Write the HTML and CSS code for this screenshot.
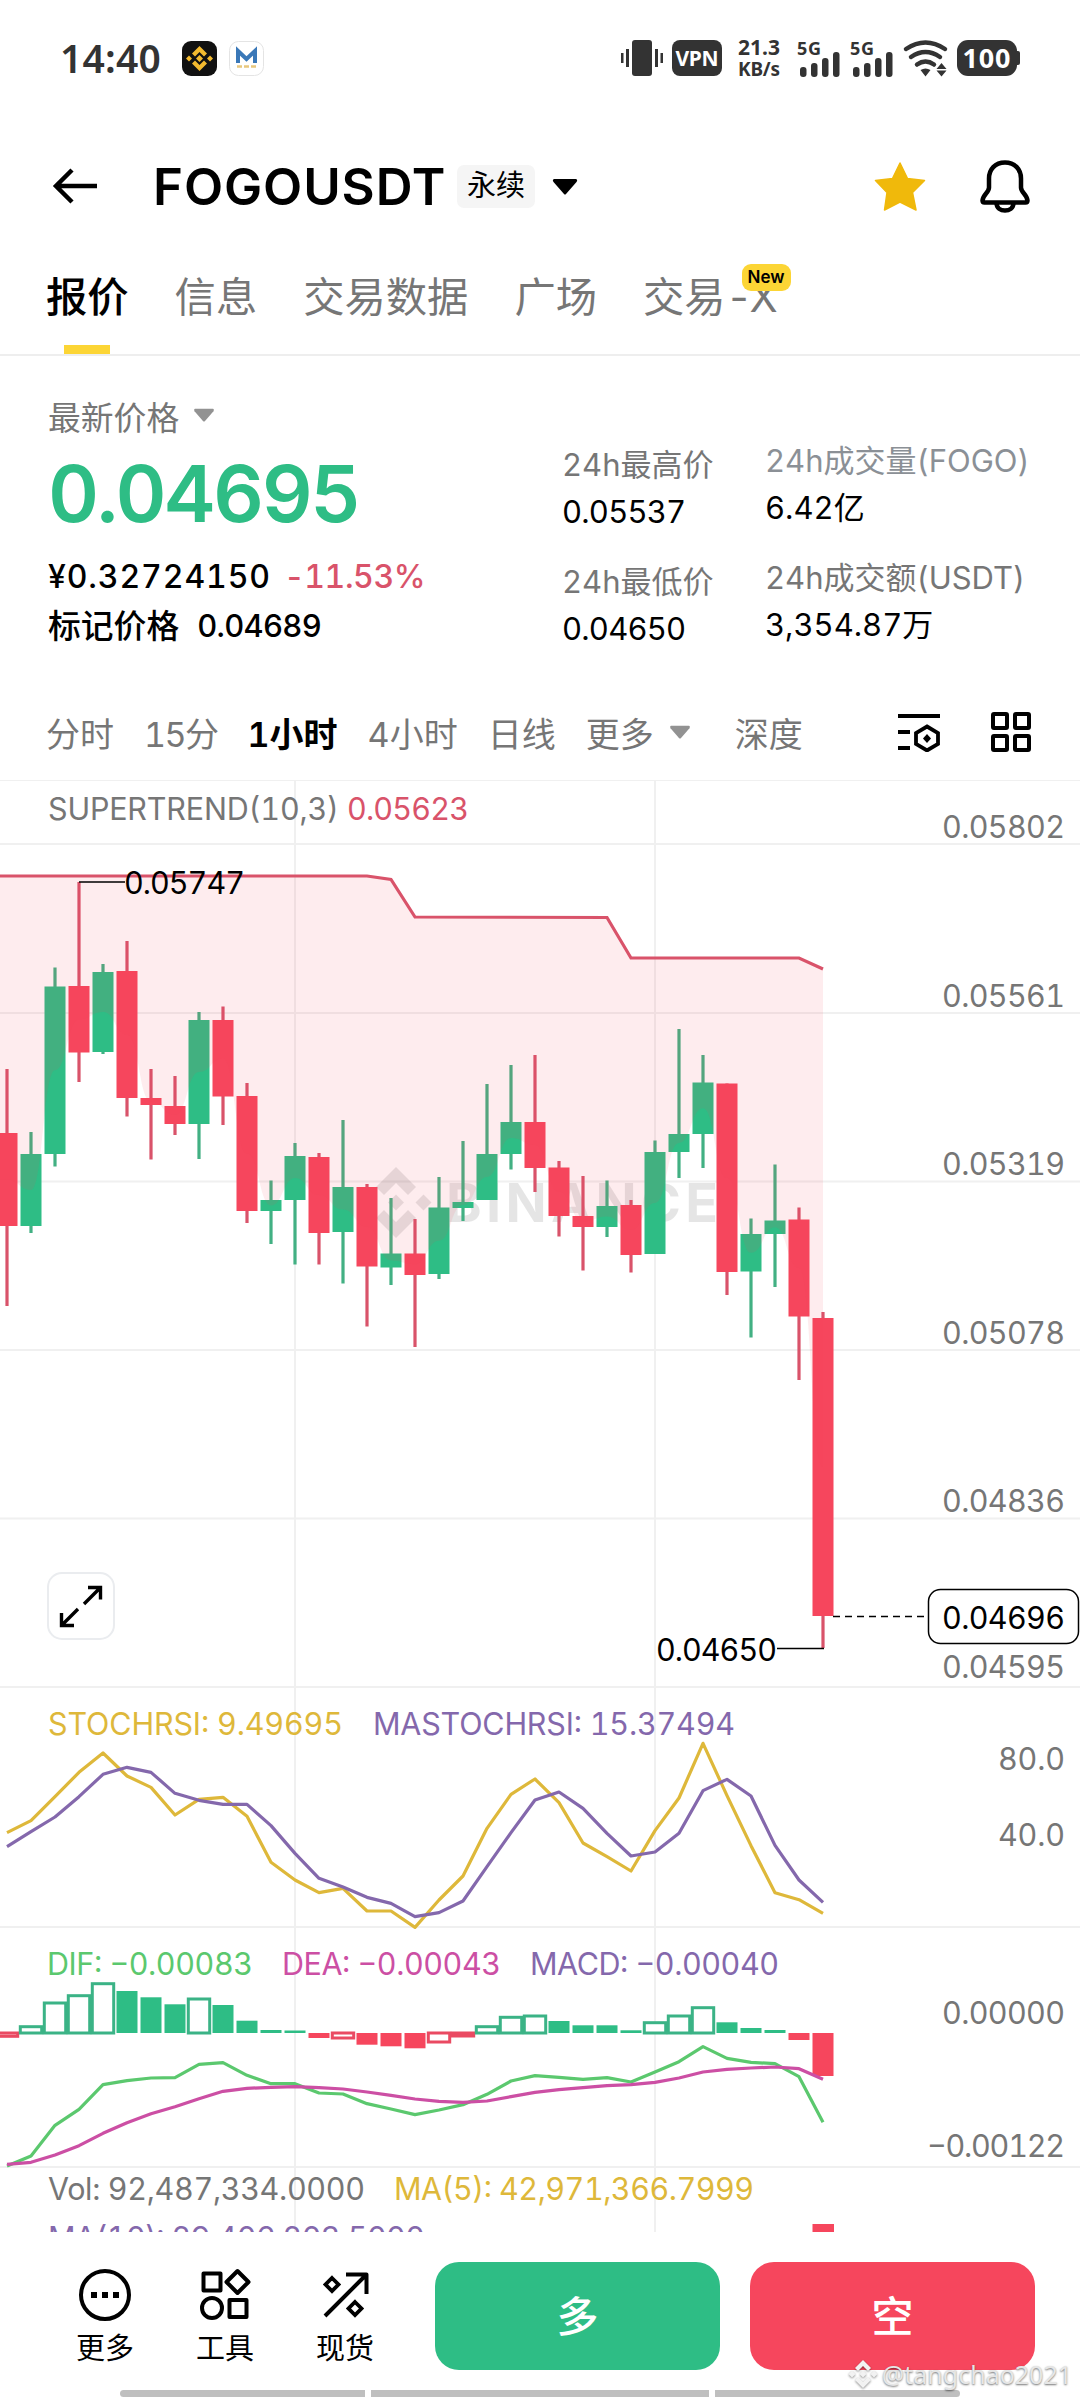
FILE: index.html
```html
<!DOCTYPE html>
<html lang="zh-CN">
<head>
    <meta charset="UTF-8">
    <meta name="viewport" content="width=device-width, initial-scale=1.0">
    <title>FOGOUSDT 永续</title>
    <link rel="stylesheet" href="styles.css">
</head>
<body>
    <div class="status-bar">
        <span class="clock">14:40</span>
        <svg class="app-icon" width="35" height="35" viewBox="0 0 35 35">
            <rect width="35" height="35" rx="9" fill="#111"/>
            <g fill="#f3ba2f">
                <path d="M17.5 5l7.5 7.5-3 3-4.500-4.500-4.500 4.500-3-3z"/>
                <path d="M17.500 30l7.500-7.500-3-3-4.500 4.500-4.500-4.500-3 3z"/>
                <path d="M17.500 14l3.500 3.500-3.500 3.500-3.500-3.500zM7 14.500l3 3-3 3-3-3zM28 14.500l3 3-3 3-3-3z"/>
            </g>
        </svg>
        <svg class="app-icon" width="35" height="35" viewBox="0 0 35 35">
            <rect x=".5" y=".5" width="34" height="34" rx="9" fill="#fff" stroke="#e4e4e4"/>
            <path d="M9 22V10l8.500 8 8.500-8v12" fill="none" stroke="#3a78b8" stroke-width="4"/>
            <path d="M8 25.500h5M15 25.500h5M22 25.500h5" stroke="#e8c77e" stroke-width="2.500"/>
        </svg>
        <svg class="status-icons" width="400" height="56" viewBox="0 -8 400 56">
            <g fill="#333">
                <rect x="11" y="2" width="20" height="36" rx="3"/>
                <path d="M0 15h2.500v10H0zM5 11h3v18H5zM34 11h3v18h-3zM39.500 15H42v10h-2.500z"/>
                <rect x="51" y="2" width="50" height="36" rx="8"/>
                <text x="117" y="16.500" font-size="21" textLength="42">21.3</text>
                <text x="117" y="38" font-size="19" textLength="42">KB/s</text>
                <text x="176" y="16.500" font-size="18" textLength="24">5G</text>
                <text x="229" y="16.500" font-size="18" textLength="24">5G</text>
                <g id="bars">
                    <rect x="179" y="29" width="6.500" height="10" rx="3"/>
                    <rect x="190" y="25" width="6.500" height="14" rx="3"/>
                    <rect x="201" y="20" width="6.500" height="19" rx="3"/>
                    <rect x="212" y="14" width="6.500" height="25" rx="3"/>
                </g>
                <use href="#bars" x="53"/>
                <path d="M299.500 32q5-3 10 0l-5 6.500zM320.500 25l5 6h-10zM320.500 38.500l5-6h-10z"/>
                <rect x="336" y="2" width="60" height="36" rx="11"/>
                <rect x="394" y="13" width="5" height="14" rx="2"/>
            </g>
            <g fill="none" stroke="#333" stroke-width="4.500" stroke-linecap="round">
                <path d="M285 11q19.500-13 39 0M290 19q14.500-10 29 0M296 26.500q8.500-6 17 0"/>
            </g>
            <g fill="#fff">
                <text x="54.500" y="27.500" font-size="21" textLength="43">VPN</text>
                <text x="341.500" y="29.500" font-size="27" textLength="48">100</text>
            </g>
        </svg>
    </div>

    <div class="header">
        <svg class="back" width="46" height="36" viewBox="0 0 46 36" fill="none" stroke="#000" stroke-width="4.500">
            <path d="M45 18H4M20 2L4 18l16 16"/>
        </svg>
        <h1>FOGOUSDT</h1>
        <span class="tag">永续</span>
        <svg class="caret" width="26" height="17" viewBox="0 0 26 17"><path d="M2 1h22q2 1 .5 3L14 16q-1 1-2 0L1.500 4Q0 2 2 1z"/></svg>
        <svg class="star" width="52" height="50" viewBox="0 0 52 50">
            <path d="M26 2l7.500 15.500 17 2L38.500 31.500l3.500 17.500L26 41 10.500 49l2.500-17.500L1.500 19.500l17-2z" fill="#f0b90b" stroke="#f0b90b" stroke-width="1.500" stroke-linejoin="round"/>
        </svg>
        <svg class="bell" width="50" height="53" viewBox="0 0 50 53" fill="none" stroke="#000" stroke-width="4.500" stroke-linejoin="round">
            <path d="M25 2.500c-10 0-16 7-16 16v9c0 5-6 7-6.500 13 0 1.500 1 2 2 2h41c1 0 2-.5 2-2-.5-6-6.500-8-6.500-13v-9c0-9-6-16-16-16z"/>
            <path d="M16.500 43c0 10 17 10 17 0"/>
        </svg>
    </div>

    <div class="tabs">
        <span class="tab active">报价</span>
        <span class="tab">信息</span>
        <span class="tab">交易数据</span>
        <span class="tab">广场</span>
        <span class="tab">交易<span class="suffix">-X</span><b class="new">New</b></span>
    </div>

    <div class="quote">
        <div class="quote-main">
            <div class="last-label">最新价格
                <svg class="caret" width="22" height="14" viewBox="0 0 26 17"><path fill="#929292" d="M2 1h22q2 1 .5 3L14 16q-1 1-2 0L1.500 4Q0 2 2 1z"/></svg>
            </div>
            <div class="last-price">0.04695</div>
            <div class="fiat"><span>¥0.32724150</span><span class="down">-11.53%</span></div>
            <div class="mark"><span>标记价格</span><span class="mark-price">0.04689</span></div>
        </div>
        <div class="stats high-low">
            <div class="label">24h最高价</div>
            <div class="value">0.05537</div>
            <div class="label">24h最低价</div>
            <div class="value">0.04650</div>
        </div>
        <div class="stats">
            <div class="label light">24h成交量(FOGO)</div>
            <div class="value">6.42亿</div>
            <div class="label">24h成交额(USDT)</div>
            <div class="value">3,354.87万</div>
        </div>
    </div>

    <div class="periods">
        <span>分时</span>
        <span class="tight">15分</span>
        <span class="active">1小时</span>
        <span>4小时</span>
        <span>日线</span>
        <span>更多</span>
        <svg class="caret" width="22" height="14" viewBox="0 0 26 17"><path fill="#929292" d="M2 1h22q2 1 .5 3L14 16q-1 1-2 0L1.500 4Q0 2 2 1z"/></svg>
        <span class="depth">深度</span>
        <svg class="indicator" width="44" height="40" viewBox="0 0 44 40" fill="none" stroke="#000" stroke-width="3.800">
            <path d="M1 4h42M1 20h12M1 36h12"/>
            <path d="M30 14.500l11 6.500v11l-11 6.500-11-6.500V21z"/>
            <path d="M30 22l4 4.500-4 4.500-4-4.500z" fill="#000" stroke="none"/>
        </svg>
        <svg class="layout" width="42" height="42" viewBox="0 0 42 42" fill="none" stroke="#000" stroke-width="4">
            <rect x="3" y="3" width="14" height="14" rx="1"/>
            <rect x="25" y="3" width="14" height="14" rx="1"/>
            <rect x="3" y="25" width="14" height="14" rx="1"/>
            <rect x="25" y="25" width="14" height="14" rx="1"/>
        </svg>
    </div>

    <svg class="chart" id="chart" width="1080" height="1452" viewBox="0 0 1080 1452">
        <path class="grid" d="M0 0H1080M0 64H1080M0 233H1080M0 401.500H1080M0 570H1080M0 738.500H1080M0 907H1080M0 1147H1080M0 1387H1080M295 0V1452M655 0V1452"/>
        <g class="brand">
            <path d="M396 387l20 20-8 8-12-12-12 12-8-8zM396 458l20-20-8-8-12 12-12-12-8 8zM396 414.500l8 8-8 8-8-8zM423.500 414.500l8 8-8 8-8-8zM368.500 414.500l8 8-8 8-8-8z"/>
            <text x="446" y="442" textLength="272">BINANCE</text>
        </g>
        <g id="candles"></g>
        <g id="trend"></g>
        <g id="macd"></g>
        <g id="lines"></g>

        <path class="pointer" d="M79 102H125M777 868.500H824"/>
        <path class="pointer" stroke-dasharray="7 5" d="M833 836.500H927"/>
        <g class="black">
            <text x="124" y="114" textLength="121">0.05747</text>
            <text x="656" y="881" textLength="121">0.04650</text>
        </g>
        <rect class="price-box" x="928.500" y="809.500" width="150" height="54" rx="12"/>

        <g class="axis">
            <text x="942" y="58" textLength="123">0.05802</text>
            <text x="942" y="227" textLength="123">0.05561</text>
            <text x="942" y="395" textLength="123">0.05319</text>
            <text x="942" y="564" textLength="123">0.05078</text>
            <text x="942" y="732" textLength="123">0.04836</text>
            <text class="black" x="942" y="849" textLength="123">0.04696</text>
            <text x="942" y="898" textLength="123">0.04595</text>
            <text x="998" y="990" textLength="67">80.0</text>
            <text x="998" y="1066" textLength="67">40.0</text>
            <text x="942" y="1244" textLength="123">0.00000</text>
            <text x="927" y="1377" textLength="138">−0.00122</text>
        </g>

        <text class="gray" x="48" y="40" textLength="291">SUPERTREND(10,3)</text>
        <text class="red" x="347" y="40" textLength="122">0.05623</text>
        <text class="yellow" x="48" y="955" textLength="295">STOCHRSI: 9.49695</text>
        <text class="purple" x="373" y="955" textLength="362">MASTOCHRSI: 15.37494</text>
        <text class="green" x="47" y="1195" textLength="206">DIF: −0.00083</text>
        <text class="pink" x="282" y="1195" textLength="219">DEA: −0.00043</text>
        <text class="purple" x="530" y="1195" textLength="249">MACD: −0.00040</text>
        <text class="gray" x="48" y="1420" textLength="317">Vol: 92,487,334.0000</text>
        <text class="yellow" x="394" y="1420" textLength="360">MA(5): 42,971,366.7999</text>
        <text class="purple" x="48" y="1469" textLength="377">MA(10): 29,406,203.5000</text>
        <rect x="812.500" y="1444" width="21.500" height="8" fill="#f6465d"/>

        <g fill="none">
            <rect x="48" y="793" width="66" height="66" rx="14" fill="#fff" stroke="#eaecef" stroke-width="2"/>
            <path d="M84 824l16-16M88 807.500h12.500v12M78 829l-16 16M61.500 833v12.500h12.500" stroke="#000" stroke-width="3.400"/>
        </g>
    </svg>

    <div class="footer">
        <div class="tool">
            <svg width="54" height="54" viewBox="0 0 54 54">
                <circle cx="27" cy="27" r="24" fill="none" stroke="#000" stroke-width="4"/>
                <path d="M13 24h6v6h-6zM24 24h6v6h-6zM35 24h6v6h-6z"/>
            </svg>
            更多
        </div>
        <div class="tool">
            <svg width="54" height="54" viewBox="0 0 54 54" fill="none" stroke="#000" stroke-width="4" stroke-linejoin="round">
                <rect x="5.500" y="5.500" width="17" height="17"/>
                <path d="M39.500 3L50.500 14l-11 11-11-11z"/>
                <circle cx="14" cy="40" r="10"/>
                <rect x="31.500" y="32" width="17" height="17"/>
            </svg>
            工具
        </div>
        <div class="tool">
            <svg width="54" height="54" viewBox="0 0 54 54" fill="none" stroke="#000" stroke-width="4">
                <path d="M7 48L48 7M28 6.500h20.500V26" stroke-linejoin="round"/>
                <path d="M14 10l6.500 6.500L14 23l-6.500-6.500zM37 34l6.500 6.500L37 47l-6.500-6.500z" stroke-width="3.800"/>
            </svg>
            现货
        </div>
        <button class="long">多</button>
        <button class="short">空</button>
    </div>
    <div class="home-bar"><i></i><i></i><i></i></div>
    <div class="signature">
        <svg width="30" height="30" viewBox="0 0 30 30">
            <path d="M15 1l8 8-3 3-5-5-5 5-3-3zM15 29l8-8-3-3-5 5-5-5-3 3zM15 11.500l3.500 3.500-3.500 3.500-3.500-3.500zM4 11.500L7.500 15 4 18.500.500 15zM26 11.500l3.500 3.500-3.500 3.500-3.500-3.500z"/>
        </svg>
        @tangchao2021
    </div>

    <script src="chart.js"></script>
</body>
</html>
```
FILE: styles.css
```css
* {
    box-sizing: border-box;
}

body {
    margin: 0;
    width: 1080px;
    height: 2400px;
    position: relative;
    overflow: hidden;
    background-color: #fff;
    color: #000;
    font-family: Inter, "Noto Sans CJK SC", sans-serif;
    font-feature-settings: "tnum";
}

svg {
    display: block;
    flex-shrink: 0;
}

/* 状态栏 */
.status-bar {
    height: 116px;
    padding: 38px 59px 0 60px;
    display: flex;
    align-items: flex-start;
    color: #333;
    font-family: "Noto Sans", sans-serif;
}

.clock {
    width: 122px;
    font-size: 39px;
    line-height: 40px;
    font-weight: 600;
    letter-spacing: 0.2px;
}

.app-icon {
    margin: 3px 12px 0 0;
}

.status-icons {
    margin: -8px 0 0 auto;
    font-weight: 700;
}

/* 标题栏 */
.header {
    height: 140px;
    padding: 0 50px 0 52px;
    display: flex;
    align-items: center;
}

h1 {
    margin: 0 0 0 55px;
    width: 304px;
    font-size: 51px;
    font-weight: 600;
    letter-spacing: 0.9px;
    white-space: nowrap;
}

.tag {
    padding: 0 10px;
    height: 43px;
    line-height: 42px;
    font-size: 29px;
    border-radius: 7px;
    background-color: #f5f5f5;
}

.header .caret {
    margin-left: 17px;
}

.star {
    margin-left: auto;
}

.bell {
    margin-left: 54px;
}

/* 页签 */
.tabs {
    height: 100px;
    padding-left: 46px;
    display: flex;
    gap: 46px;
    border-bottom: 2px solid #eee;
    font-size: 41.3px;
    line-height: 82px;
    color: #767676;
}

.tab {
    position: relative;
    white-space: nowrap;
}

.tab.active {
    color: #000;
    font-weight: 500;
}

.tab.active::after {
    content: "";
    position: absolute;
    left: 18px;
    bottom: 0;
    width: 46px;
    height: 9px;
    background-color: #fcd535;
}

.suffix {
    letter-spacing: -3px;
}

.new {
    position: absolute;
    right: -16px;
    top: 8px;
    width: 49px;
    height: 27px;
    border-radius: 9px;
    background-color: #fcd535;
    color: #000;
    font-size: 17px;
    line-height: 27px;
    font-weight: 600;
    text-align: center;
}

/* 行情数据 */
.quote {
    height: 334px;
    padding: 34px 0 0 48px;
    display: flex;
    font-size: 31px;
}

.quote-main {
    width: 514px;
}

.last-label {
    display: flex;
    align-items: center;
    gap: 14px;
    height: 50px;
    font-size: 32.8px;
    color: #767676;
}

.last-price {
    height: 106px;
    line-height: 106px;
    font-size: 79px;
    font-weight: 600;
    letter-spacing: -2.4px;
    color: #2ebd85;
}

.fiat {
    height: 59px;
    line-height: 61px;
    display: flex;
    gap: 13px;
    font-size: 32px;
    font-weight: 500;
    letter-spacing: 0.9px;
}

.down {
    color: #d9536a;
    letter-spacing: -0.4px;
}

.mark {
    height: 40px;
    line-height: 42px;
    display: flex;
    gap: 18px;
    font-size: 32.8px;
    font-weight: 500;
}

.mark-price {
    font-size: 31px;
    letter-spacing: -0.7px;
}

.stats {
    padding-top: 48px;
    white-space: nowrap;
}

.high-low {
    width: 203px;
    padding-top: 52px;
}

.label {
    height: 46px;
    line-height: 46px;
    color: #767676;
}

.label.light {
    color: #8b9096;
}

.value {
    height: 71px;
    line-height: 48px;
}

.high-low .value {
    letter-spacing: -0.8px;
}

/* 周期切换 */
.periods {
    height: 90px;
    padding: 0 48px 6px 46px;
    display: flex;
    align-items: center;
    gap: 30px;
    font-size: 34px;
    color: #767676;
    white-space: nowrap;
}

.periods .active {
    color: #000;
    font-weight: 600;
}

.periods .tight {
    letter-spacing: -1.5px;
}

.periods .caret {
    margin-left: -15px;
}

.depth {
    margin-left: 14px;
}

.indicator {
    margin-left: auto;
}

.layout {
    margin-left: 19px;
}

/* 图表 */
.chart {
    font-size: 30.5px;
    overflow: hidden;
}

.grid {
    fill: none;
    stroke: #f0f0f0;
    stroke-width: 2;
}

.brand {
    fill: #000;
    fill-opacity: 0.1;
    font-size: 54px;
    font-weight: 700;
}

.up-body { fill: #2ebd85; }
.down-body { fill: #f6465d; }
.up-line { fill: none; stroke: #42b083; stroke-width: 3.2; }
.down-line { fill: none; stroke: #d9536a; stroke-width: 3.2; }
.trend-area { fill: #f6465d; fill-opacity: 0.1; }
.line { fill: none; stroke-width: 3.2; stroke-linejoin: round; }
.stroke-yellow { stroke: #deb83a; }
.stroke-purple { stroke: #8468ac; }
.stroke-green { stroke: #5bc86e; }
.stroke-pink { stroke: #cc4fa4; }
.pointer { fill: none; stroke: #000; stroke-width: 1.5; }
.price-box { fill: #fff; stroke: #000; stroke-width: 1.5; }
.axis, .gray { fill: #767676; }
.black { fill: #000; }
.red { fill: #d9536a; }
.yellow { fill: #deb83a; }
.purple { fill: #8468ac; }
.green { fill: #5bc86e; }
.pink { fill: #cc4fa4; }

/* 底部操作栏 */
.footer {
    height: 158px;
    padding: 30px 45px 0 45px;
    display: flex;
}

.tool {
    width: 120px;
    padding-top: 6px;
    display: flex;
    flex-direction: column;
    align-items: center;
    gap: 9px;
    font-size: 29px;
    line-height: 36px;
}

.long,
.short {
    width: 285px;
    height: 108px;
    margin: 0 0 0 30px;
    padding: 0 0 5px;
    border: none;
    border-radius: 24px;
    font: inherit;
    font-size: 42px;
    font-weight: 500;
    color: #fff;
}

.long {
    background-color: #2ebd85;
}

.short {
    background-color: #f6465d;
}

.home-bar {
    width: 840px;
    height: 7px;
    margin: 0 auto;
    display: grid;
    grid-template-columns: 245px 338px 245px;
    gap: 6px;
    border-radius: 4px;
    overflow: hidden;
}

.home-bar i {
    background-color: #bfbfbf;
}

.signature {
    position: absolute;
    right: 8px;
    bottom: 9px;
    display: flex;
    align-items: center;
    gap: 4px;
    height: 34px;
    font-family: "Noto Sans", sans-serif;
    font-size: 25px;
    color: #e6e6e6;
    text-shadow: 0 1px 2px rgba(0, 0, 0, 0.55);
}

.signature svg {
    fill: #f2f2f2;
    filter: drop-shadow(0 1px 1px rgba(0, 0, 0, 0.45));
}
```
FILE: chart.js
```js
const STEP = 24;
const FIRST = 7;
const ZERO = 1253;

// 每根K线: [最高, 实体上沿, 实体下沿, 最低, 涨跌]
const candles = [
    [289, 353, 446, 526, 0], [352, 374, 446, 453, 1], [187.5, 206.5, 374, 386.5, 1],
    [102, 206, 272.5, 302, 0], [184, 192, 272, 274, 1], [161, 191, 318, 336.5, 0],
    [289, 318, 325, 379.5, 0], [296, 326, 344, 355, 0], [232, 240, 344, 379, 1],
    [226.5, 240, 316.5, 345, 0], [303, 316, 431, 443, 0], [400.5, 420, 431, 464, 1],
    [363, 376, 420, 484.5, 1], [373, 377, 453, 484.5, 0], [340, 407, 452, 503.5, 1],
    [404, 407, 486.5, 546.5, 0], [418, 473.5, 487.5, 505, 1], [439, 473.5, 495, 567, 0],
    [397, 427.5, 494, 499, 1], [361, 422, 428, 441, 1], [304, 374, 420, 420, 1],
    [285, 342, 374, 389.5, 1], [275, 342, 388, 412, 0], [381, 387.5, 436, 456.5, 0],
    [396, 436, 447, 490.5, 0], [400.5, 426, 447, 457, 1], [420, 425, 475, 492.5, 0],
    [360.5, 372, 474, 474, 1], [249, 354, 372, 398, 1], [275, 302.5, 354, 388, 1],
    [303.5, 303.5, 492, 515, 0], [438.5, 454, 491.5, 557.5, 1], [384.5, 440.5, 454, 507, 1],
    [427.5, 439.5, 536.5, 600, 0], [532, 538, 836, 868, 0]
];

// MACD柱: [高度, 是否空心]
const bars = [
    [-3.3, 1], [6.3, 1], [30, 1], [37.3, 1], [49.3, 1], [42, 0], [35.7, 0], [28.7, 0], [34, 1],
    [28, 0], [12.3, 0], [3, 0], [2.5, 0], [-5, 0], [-5, 1], [-11.7, 0], [-13.3, 0], [-15.3, 0],
    [-9, 1], [-3, 1], [6.3, 1], [15.7, 1], [17, 1], [12, 0], [7.7, 0], [7.7, 0], [2.7, 0],
    [10.3, 1], [17, 1], [25.3, 1], [10.7, 0], [5, 0], [3, 0], [-7, 0], [-43, 0]
];

const stoch = [458, 422, 350, 277, 219, 288, 322, 405, 358, 352, 409, 547, 600, 638, 625, 693, 693, 742, 660, 588, 445, 343, 297, 368, 489, 530, 573, 452, 354, 190, 347, 497, 638, 659, 700];
const stochMa = [500, 455, 411, 350, 283, 262, 277, 340, 361, 373, 373, 437, 520, 595, 621, 652, 670, 710, 698, 663, 560, 458, 360, 336, 385, 460, 528, 516, 460, 332, 298, 348, 496, 600, 667];
const dif = [708, 678, 586, 538, 464, 452, 444, 443, 403, 398, 436, 461, 461, 489, 492, 521, 537, 554, 540, 524, 493, 453, 437, 442, 448, 443, 456, 426, 395, 350, 385, 397, 401, 440, 577];
const dea = [703, 697, 675, 647, 610, 578, 551, 530, 506, 484, 475, 472, 470, 473, 477, 486, 496, 507, 514, 517, 513, 500, 487, 479, 473, 467, 464, 457, 444, 426, 418, 414, 411, 416, 448];

const x = i => FIRST + STEP * i;

function drawCandles() {
    let html = '';
    candles.forEach(([high, top, bottom, low, up], i) => {
        const name = up ? 'up' : 'down';
        html += `<path class="${name}-line" d="M${x(i)} ${high}V${low}"/>`;
        html += `<rect class="${name}-body" x="${x(i) - 10.5}" y="${top}" width="21" height="${bottom - top}"/>`;
    });
    document.getElementById('candles').innerHTML = html;
}

// 超级趋势线以及到K线中点之间的填充
function drawTrend() {
    const trend = '0,96 367,96 391,99.5 415,137 607,137.5 631,178 799,178 823,189';
    const mid = candles.map(c => (c[1] + c[2]) / 2);
    let area = `M${trend.split(' ').join('L')}L${x(34)},${mid[34]}`;
    for (let i = 33; i >= 0; i--) {
        const half = x(i) + STEP / 2;
        area += `C${half},${mid[i + 1]} ${half},${mid[i]} ${x(i)},${mid[i]}`;
    }
    area += `L0,${mid[0]}Z`;
    document.getElementById('trend').innerHTML =
        `<path class="trend-area" d="${area}"/><polyline class="down-line" points="${trend}"/>`;
}

function drawMacd() {
    let html = '';
    bars.forEach(([value, hollow], i) => {
        const name = value > 0 ? 'up' : 'down';
        const y = value > 0 ? ZERO - value : ZERO;
        const h = Math.abs(value);
        if (hollow) {
            const color = value > 0 ? '#3bb386' : '#ea4a62';
            html += `<rect fill="#fff" stroke="${color}" stroke-width="3" x="${x(i) - 10.7}" y="${y}" width="21.4" height="${h}"/>`;
        } else {
            html += `<rect class="${name}-body" x="${x(i) - 10.5}" y="${y}" width="21" height="${h}"/>`;
        }
    });
    document.getElementById('macd').innerHTML = html;
}

function polyline(values, offset, color) {
    const points = values.map((v, i) => `${x(i)},${offset + v / 3}`).join(' ');
    return `<polyline class="line stroke-${color}" points="${points}"/>`;
}

drawCandles();
drawTrend();
drawMacd();
document.getElementById('lines').innerHTML =
    polyline(stoch, 900, 'yellow') + polyline(stochMa, 900, 'purple') +
    polyline(dif, 1150, 'green') + polyline(dea, 1150, 'pink');
```
